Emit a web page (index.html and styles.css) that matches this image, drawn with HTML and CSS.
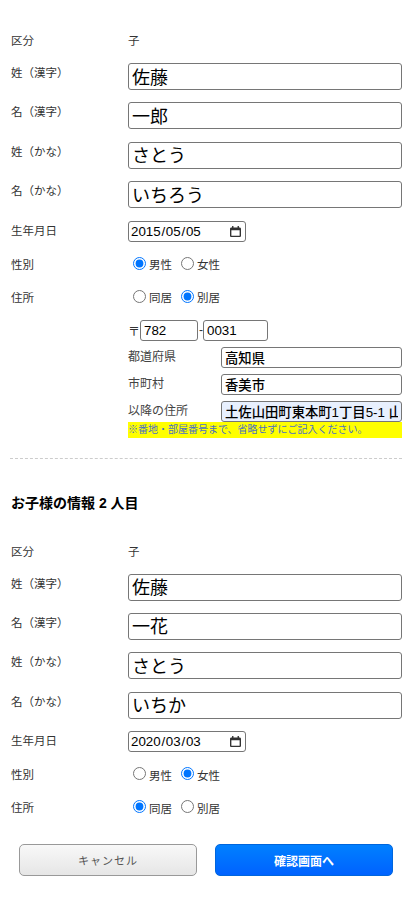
FILE: index.html
```html
<!DOCTYPE html>
<html lang="ja">
<head>
<meta charset="utf-8">
<title>お子様の情報</title>
<link rel="stylesheet" href="styles.css">
</head>
<body>
<main class="page">
  <section class="child first">
    <div class="row row-plain"><span class="label">区分</span><span class="value">子</span></div>
    <div class="row row-text"><span class="label">姓（漢字）</span><input class="text-big" type="text" value="佐藤"></div>
    <div class="row row-text"><span class="label">名（漢字）</span><input class="text-big" type="text" value="一郎"></div>
    <div class="row row-text"><span class="label">姓（かな）</span><input class="text-big" type="text" value="さとう"></div>
    <div class="row row-text"><span class="label">名（かな）</span><input class="text-big" type="text" value="いちろう"></div>
    <div class="row row-date"><span class="label label-date">生年月日</span>
      <div class="date"><span>2015</span><span class="sep">/</span><span>05</span><span class="sep">/</span><span>05</span>
        <svg class="cal" viewBox="0 0 16 16" aria-hidden="true"><path d="M14 2h-1V0h-2v2H5V0H3v2H2C.9 2 0 2.9 0 4v10c0 1.1.9 2 2 2h12c1.1 0 2-.9 2-2V4c0-1.1-.9-2-2-2zm0 12H2V6h12z"/></svg>
      </div>
    </div>
    <div class="row row-radio"><span class="label">性別</span>
      <div class="radios">
        <label class="radio"><input type="radio" name="g1" checked>男性</label>
        <label class="radio"><input type="radio" name="g1">女性</label>
      </div>
    </div>
    <div class="row row-radio"><span class="label">住所</span>
      <div class="radios">
        <label class="radio"><input type="radio" name="a1">同居</label>
        <label class="radio"><input type="radio" name="a1" checked>別居</label>
      </div>
    </div>
    <div class="address">
      <div class="postal"><span>〒</span><input class="zip zip-a" type="text" value="782"><span>-</span><input class="zip zip-b" type="text" value="0031"></div>
      <div class="addr-row"><span class="addr-label">都道府県</span><input class="addr" type="text" value="高知県"></div>
      <div class="addr-row"><span class="addr-label">市町村</span><input class="addr" type="text" value="香美市"></div>
      <div class="addr-row"><span class="addr-label">以降の住所</span><input class="addr filled" type="text" value="土佐山田町東本町1丁目5-1 山田ハイツ101"></div>
      <p class="note">※番地・部屋番号まで、省略せずにご記入ください。</p>
    </div>
  </section>

  <hr class="divider">

  <h2 class="title">お子様の情報 2 人目</h2>

  <section class="child">
    <div class="row row-plain"><span class="label">区分</span><span class="value">子</span></div>
    <div class="row row-text"><span class="label">姓（漢字）</span><input class="text-big" type="text" value="佐藤"></div>
    <div class="row row-text"><span class="label">名（漢字）</span><input class="text-big" type="text" value="一花"></div>
    <div class="row row-text"><span class="label">姓（かな）</span><input class="text-big" type="text" value="さとう"></div>
    <div class="row row-text"><span class="label">名（かな）</span><input class="text-big" type="text" value="いちか"></div>
    <div class="row row-date"><span class="label label-date">生年月日</span>
      <div class="date"><span>2020</span><span class="sep">/</span><span>03</span><span class="sep">/</span><span>03</span>
        <svg class="cal" viewBox="0 0 16 16" aria-hidden="true"><path d="M14 2h-1V0h-2v2H5V0H3v2H2C.9 2 0 2.9 0 4v10c0 1.1.9 2 2 2h12c1.1 0 2-.9 2-2V4c0-1.1-.9-2-2-2zm0 12H2V6h12z"/></svg>
      </div>
    </div>
    <div class="row row-radio"><span class="label">性別</span>
      <div class="radios">
        <label class="radio"><input type="radio" name="g2">男性</label>
        <label class="radio"><input type="radio" name="g2" checked>女性</label>
      </div>
    </div>
    <div class="row row-radio"><span class="label">住所</span>
      <div class="radios">
        <label class="radio"><input type="radio" name="a2" checked>同居</label>
        <label class="radio"><input type="radio" name="a2">別居</label>
      </div>
    </div>
  </section>

  <div class="actions">
    <button class="btn btn-cancel" type="button">キャンセル</button>
    <button class="btn btn-next" type="button">確認画面へ</button>
  </div>
</main>
</body>
</html>
```

FILE: styles.css
```css
* { box-sizing: border-box; }
html, body { margin: 0; background: #fff; }
body {
  font-family: "Liberation Sans", "Noto Sans CJK JP", sans-serif;
  font-size: 11.5px;
  color: #333;
}
.page { padding: 32px 10px 38px; }
.row { display: flex; align-items: flex-start; }
.label { flex: 0 0 118px; padding-left: 1px; line-height: 16px; }
.value { line-height: 16px; color: #333; }
.row-plain { height: 31px; }
.row-plain .label, .row-plain .value { padding-top: 1px; }
.row-text { height: 39.4px; }
.row-text .label { padding-top: 2px; }
.row-date { height: 35px; }
.row-date .label { padding-top: 2px; }
.row-radio { height: 33px; }
.row-radio .label { padding-top: 1px; }
input { font-family: "Liberation Sans", "Noto Sans CJK JP", sans-serif; color: #000; margin: 0; }
.text-big {
  flex: 1;
  height: 27px;
  font-size: 18px;
  padding: 0 3px 2px;
  border: 1px solid #767676;
  border-radius: 3px;
}
.date {
  display: flex;
  align-items: center;
  width: 118px;
  height: 21px;
  font-size: 13.333px;
  padding: 0 3px 0 2px;
  border: 1px solid #767676;
  border-radius: 3px;
  background: #fff;
  color: #000;
}
.sep { margin: 0 0.75px; }
.cal { width: 11px; height: 11px; margin-left: auto; margin-right: 1px; fill: #333; }
.radios { display: flex; gap: 9px; padding: 1px 0 0 5px; }
.radio { display: flex; align-items: center; line-height: 16px; color: #333; }
.radio input { width: 13px; height: 13px; margin: 0 3px 4px 0; accent-color: #0075ff; }
.address { margin: -2px 0 0 118px; }
.postal { display: flex; align-items: center; height: 21px; font-size: 12px; }
.zip { height: 21px; font-size: 13.333px; padding: 0 3px; border: 1px solid #767676; border-radius: 3px; }
.zip-a { width: 58px; margin-right: 1px; }
.zip-b { width: 65px; }
.addr-row { display: flex; align-items: center; height: 21px; margin-top: 6px; }
.addr-label { flex: 0 0 93px; font-size: 12px; line-height: 17px; color: #444; }
.addr {
  flex: 1;
  min-width: 0;
  height: 21px;
  font-size: 13.333px;
  font-weight: 500;
  padding: 0 3px;
  border: 1px solid #767676;
  border-radius: 3px;
}
.filled { background: #e8f0fe; }
.note {
  margin: 0;
  height: 16px;
  background: #ff0;
  color: #4a6fc4;
  font-size: 10px;
  line-height: 16px;
}
.divider { border: 0; border-top: 1px dashed #ccc; margin: 20px 0 0; }
.title { margin: 36px 0 0; font-size: 14px; line-height: 16px; font-weight: 700; color: #000; padding-left: 1px; }
.title + .child { margin-top: 32px; }
.actions { display: flex; justify-content: center; gap: 18px; margin-top: 12px; }
.btn {
  width: 178px;
  height: 32px;
  border-radius: 5px;
  font-family: "Liberation Sans", "Noto Sans CJK JP", sans-serif;
  font-size: 11px;
  padding: 0;
}
.btn-cancel { border: 1px solid #999; background: linear-gradient(#f8f8f8, #e6e6e6); color: #555; letter-spacing: 1px; }
.btn-next { border: 1px solid #0066dd; background: linear-gradient(#0080ff, #0062ff); color: #fff; font-weight: 700; font-size: 12px; }
```
